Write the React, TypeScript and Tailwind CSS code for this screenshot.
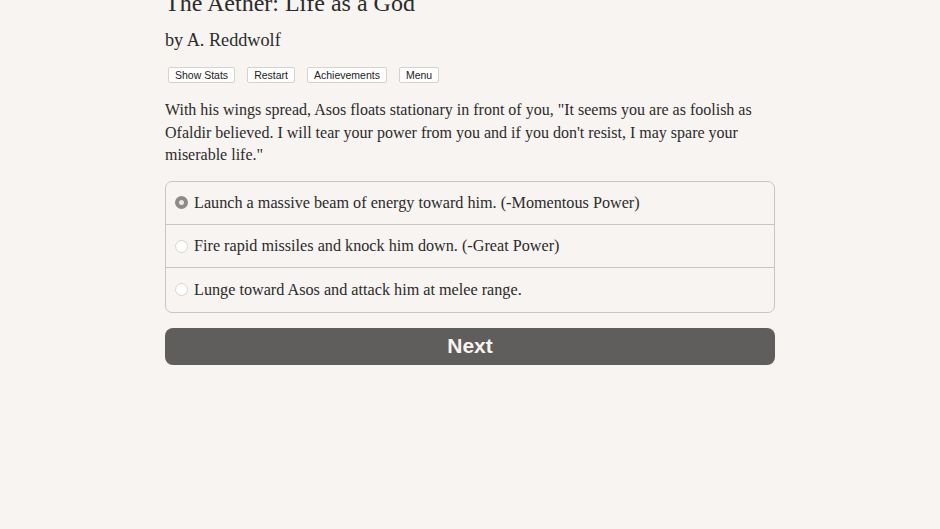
import { useState } from 'react'

const OPTIONS = [
  'Launch a massive beam of energy toward him. (-Momentous Power)',
  'Fire rapid missiles and knock him down. (-Great Power)',
  'Lunge toward Asos and attack him at melee range.',
]

const MENU = ['Show Stats', 'Restart', 'Achievements', 'Menu']

export default function App() {
  const [picked, setPicked] = useState(0)

  return (
    <div className="min-h-[529px] w-full overflow-hidden bg-[#f7f4f1] text-[#2b2b2b]">
      <div className="mx-auto w-[610px] font-['Liberation_Serif',serif]">
        <h1 className="-mt-[11px] text-[24px] leading-[28px]">The Aether: Life as a God</h1>
        <p className="mt-[11px] text-[18.2px] leading-[24px]">by A. Reddwolf</p>

        <div className="ml-[3px] mt-[15px] flex gap-[12px] font-['Liberation_Sans',sans-serif]">
          {MENU.map((label) => (
            <button
              key={label}
              className="h-[16px] rounded-[2px] border border-[#d6d3cf] bg-white px-[6px] text-[10.5px] leading-[14px] text-[#222]"
            >
              {label}
            </button>
          ))}
        </div>

        <p className="mt-[16px] text-[16px] leading-[22.5px]">
          With his wings spread, Asos floats stationary in front of you, "It seems you are as foolish as
          Ofaldir believed. I will tear your power from you and if you don't resist, I may spare your
          miserable life."
        </p>

        <div className="mt-[14px] overflow-hidden rounded-[7px] border border-[#c9c6c2] divide-y divide-[#c9c6c2]">
          {OPTIONS.map((text, i) => (
            <label key={i} className="flex h-[43.4px] cursor-pointer items-center gap-[6px] pl-[9px] text-[16.2px]">
              <span
                onClick={() => setPicked(i)}
                className={
                  picked === i
                    ? 'flex size-[13px] items-center justify-center rounded-full bg-[#8d8b89]'
                    : 'size-[13px] rounded-full border border-[#d8d5d1] bg-white'
                }
              >
                {picked === i && <span className="size-[5px] rounded-full bg-[#e9e7e4]" />}
              </span>
              <span>{text}</span>
            </label>
          ))}
        </div>

        <button className="mt-[15px] h-[37px] w-full rounded-[8px] bg-[#5f5e5c] font-['Liberation_Sans',sans-serif] text-[21px] font-bold text-[#f7f4f1]">
          Next
        </button>
      </div>
    </div>
  )
}
